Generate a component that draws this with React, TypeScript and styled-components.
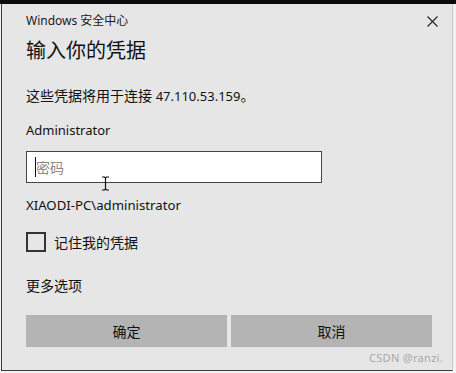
import React from "react";
import styled, { createGlobalStyle } from "styled-components";

const GlobalStyle = createGlobalStyle`
    html, body {
        margin: 0;
        padding: 0;
        background: #f2f2f2;
    }
    body {
        font-family: "Segoe UI", "Noto Sans", "Noto Sans CJK SC", sans-serif;
        color: #111;
    }
`;

const App = () => {
    return (
        <Screen>
            <GlobalStyle />
            <Dialog>
                <TitleBar>
                    <TitleText>Windows 安全中心</TitleText>
                    <CloseButton aria-label="关闭">
                        <svg width="11" height="11" viewBox="0 0 11 11">
                            <path d="M0.5 0.5 L10.5 10.5 M10.5 0.5 L0.5 10.5" stroke="#222" strokeWidth="1.1" fill="none" />
                        </svg>
                    </CloseButton>
                </TitleBar>
                <Heading>输入你的凭据</Heading>
                <Line $top={21} $size={14}>
                    这些凭据将用于连接 <Latin>47.110.53.159</Latin>。
                </Line>
                <Line $top={14} $size={13}>Administrator</Line>
                <InputWrap>
                    <PasswordInput placeholder="密码" />
                    <Caret />
                </InputWrap>
                <Line $top={12} $size={13.2}>XIAODI-PC\administrator</Line>
                <CheckRow>
                    <CheckBox />
                    <span>记住我的凭据</span>
                </CheckRow>
                <Line $top={24} $size={14}>更多选项</Line>
                <Buttons>
                    <Button>确定</Button>
                    <Button>取消</Button>
                </Buttons>
                <Watermark>CSDN @ranzi.</Watermark>
                <Cursor width="9" height="15" viewBox="0 0 9 15">
                    <path d="M1 1 H3.5 L4.5 2 L5.5 1 H8 M4.5 2 V13 M1 14 H3.5 L4.5 13 L5.5 14 H8" stroke="#111" strokeWidth="1.2" fill="none" />
                </Cursor>
            </Dialog>
        </Screen>
    );
};

const Screen = styled.div`
    width: 456px;
    height: 373px;
    border-top: 4px solid #0a0a0a;
    box-sizing: border-box;
    overflow: hidden;
`;

const Dialog = styled.div`
    position: relative;
    margin-left: 1px;
    width: 452px;
    height: 367px;
    box-sizing: border-box;
    background: #e6e6e6;
    border-left: 1px solid #3a3a3a;
    border-right: 1px solid #c8c8c8;
    border-bottom: 1px solid #3a3a3a;
    padding: 7px 20px 0 24px;
    display: flex;
    flex-direction: column;
`;

const TitleBar = styled.div`
    height: 20px;
    display: flex;
    align-items: center;
    justify-content: space-between;
    margin-right: -6px;
`;

const TitleText = styled.span`
    font-size: 12px;
    line-height: 20px;
    color: #1a1a1a;
`;

const CloseButton = styled.div`
    width: 11px;
    height: 11px;
    display: flex;
`;

const Heading = styled.h1`
    margin: 6px 0 0;
    font-size: 20px;
    font-weight: 400;
    line-height: 28px;
    color: #111;
`;

const Line = styled.div<{ $top: number; $size: number }>`
    margin-top: ${(p) => p.$top}px;
    font-size: ${(p) => p.$size}px;
    line-height: 20px;
    height: 20px;
    white-space: nowrap;
`;

const Latin = styled.span`
    font-size: 13px;
`;

const InputWrap = styled.div`
    position: relative;
    margin-top: 11px;
    width: 296px;
    height: 32px;
`;

const PasswordInput = styled.input`
    width: 100%;
    height: 100%;
    box-sizing: border-box;
    border: 1.5px solid #444;
    background: #fff;
    padding: 0 0 0 9px;
    font-family: inherit;
    font-size: 14px;
    outline: none;

    &::placeholder {
        color: #8a8a8a;
    }
`;

const Caret = styled.span`
    position: absolute;
    left: 9px;
    top: 6px;
    width: 1px;
    height: 20px;
    background: #111;
`;

const CheckRow = styled.label`
    margin-top: 17px;
    display: flex;
    align-items: center;
    gap: 8px;
    height: 20px;
    font-size: 14px;
`;

const CheckBox = styled.span`
    width: 20px;
    height: 20px;
    box-sizing: border-box;
    border: 2px solid #333;
`;

const Buttons = styled.div`
    margin-top: 19px;
    display: grid;
    grid-template-columns: 1fr 1fr;
    gap: 4px;
`;

const Button = styled.button`
    height: 32px;
    border: none;
    background: #b4b4b4;
    font-family: inherit;
    font-size: 14px;
    color: #111;
    padding: 0;
`;

const Watermark = styled.span`
    position: absolute;
    right: 9px;
    bottom: 5px;
    font-size: 11px;
    color: #a6a6a6;
    letter-spacing: 0.3px;
`;

const Cursor = styled.svg`
    position: absolute;
    left: 99px;
    top: 172px;
`;

export default App;
